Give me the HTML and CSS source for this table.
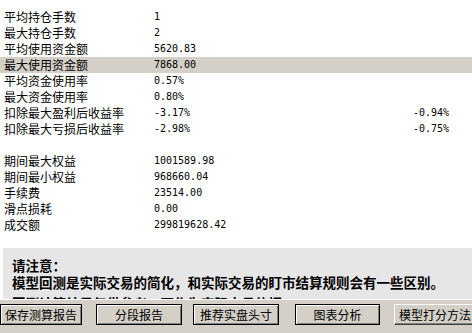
FILE: index.html
```html
<!DOCTYPE html>
<html lang="zh">
<head>
<meta charset="utf-8">
<link rel="stylesheet" href="styles.css">
</head>
<body>
<div class="page">
  <div class="stats">
    <div class="row"><span class="lbl">平均持仓手数</span><span class="val">1</span></div>
    <div class="row"><span class="lbl">最大持仓手数</span><span class="val">2</span></div>
    <div class="row"><span class="lbl">平均使用资金额</span><span class="val">5620.83</span></div>
    <div class="row sel"><span class="lbl">最大使用资金额</span><span class="val">7868.00</span></div>
    <div class="row"><span class="lbl">平均资金使用率</span><span class="val">0.57%</span></div>
    <div class="row"><span class="lbl">最大资金使用率</span><span class="val">0.80%</span></div>
    <div class="row"><span class="lbl">扣除最大盈利后收益率</span><span class="val">-3.17%</span><span class="val2">-0.94%</span></div>
    <div class="row"><span class="lbl">扣除最大亏损后收益率</span><span class="val">-2.98%</span><span class="val2">-0.75%</span></div>
    <div class="row blank"></div>
    <div class="row"><span class="lbl">期间最大权益</span><span class="val">1001589.98</span></div>
    <div class="row"><span class="lbl">期间最小权益</span><span class="val">968660.04</span></div>
    <div class="row"><span class="lbl">手续费</span><span class="val">23514.00</span></div>
    <div class="row"><span class="lbl">滑点损耗</span><span class="val">0.00</span></div>
    <div class="row"><span class="lbl">成交额</span><span class="val">299819628.42</span></div>
  </div>
  <div class="notice">
    <p>请注意：</p>
    <p>模型回测是实际交易的简化，和实际交易的盯市结算规则会有一些区别。</p>
    <p class="cut">回测计算结果仅供参考，不作为实际交易依据。</p>
  </div>
  <div class="bar">
    <button class="btn def b1">保存测算报告</button>
    <button class="btn def b2">分段报告</button>
    <button class="btn def b3">推荐实盘头寸</button>
    <button class="btn def b4">图表分析</button>
    <button class="btn b5">模型打分方法</button>
  </div>
</div>
</body>
</html>
```

FILE: styles.css
```css
html, body {
  margin: 0;
  padding: 0;
  background: #ffffff;
}
.page {
  width: 472px;
  height: 333px;
  overflow: hidden;
  display: flex;
  flex-direction: column;
  font-family: "Noto Sans CJK SC", "Noto Sans", sans-serif;
  color: #000;
}
.stats {
  padding-top: 9px;
}
.row {
  display: flex;
  height: 16px;
  line-height: 16px;
  font-size: 12px;
  white-space: nowrap;
}
.row.sel {
  background: #d4d0c8;
}
.lbl {
  width: 150px;
  padding-left: 4px;
}
.val {
  width: 259px;
  font-family: "DejaVu Sans Mono", "Liberation Mono", monospace;
  font-size: 10px;
}
.val2 {
  font-family: "DejaVu Sans Mono", "Liberation Mono", monospace;
  font-size: 10px;
}
.notice {
  margin-top: 15px;
  margin-left: 3px;
  height: 52px;
  overflow: hidden;
  background: #e6e6e6;
  padding: 9px 0 0 9px;
  box-sizing: border-box;
  font-size: 13.5px;
  font-weight: bold;
  line-height: 17px;
  white-space: nowrap;
  border-bottom: 1px solid #ffffff;
}
.notice p {
  margin: 0;
}
.notice p.cut {
  margin-top: 4px;
}
.bar {
  flex: 1;
  background: #d4d0c8;
  display: flex;
  align-items: flex-start;
  padding-top: 4px;
}
.btn {
  height: 21px;
  padding: 0;
  margin: 0;
  font-family: "Noto Sans CJK SC", "Noto Sans", sans-serif;
  font-size: 12px;
  line-height: 17px;
  color: #000;
  background: #d4d0c8;
  border: 1px solid;
  border-color: #ffffff #404040 #404040 #ffffff;
  box-shadow: inset -1px -1px 0 #808080;
  box-sizing: border-box;
  flex: none;
}
.btn.def {
  border: 1px solid #000;
  box-shadow: inset 1px 1px 0 #ffffff, inset -1px -1px 0 #808080;
}
.b1 { width: 82px; margin-left: 0; }
.b2 { width: 86px; margin-left: 14px; }
.b3 { width: 86px; margin-left: 11px; }
.b4 { width: 85px; margin-left: 16px; }
.b5 { width: 82px; margin-left: 14px; }
```
